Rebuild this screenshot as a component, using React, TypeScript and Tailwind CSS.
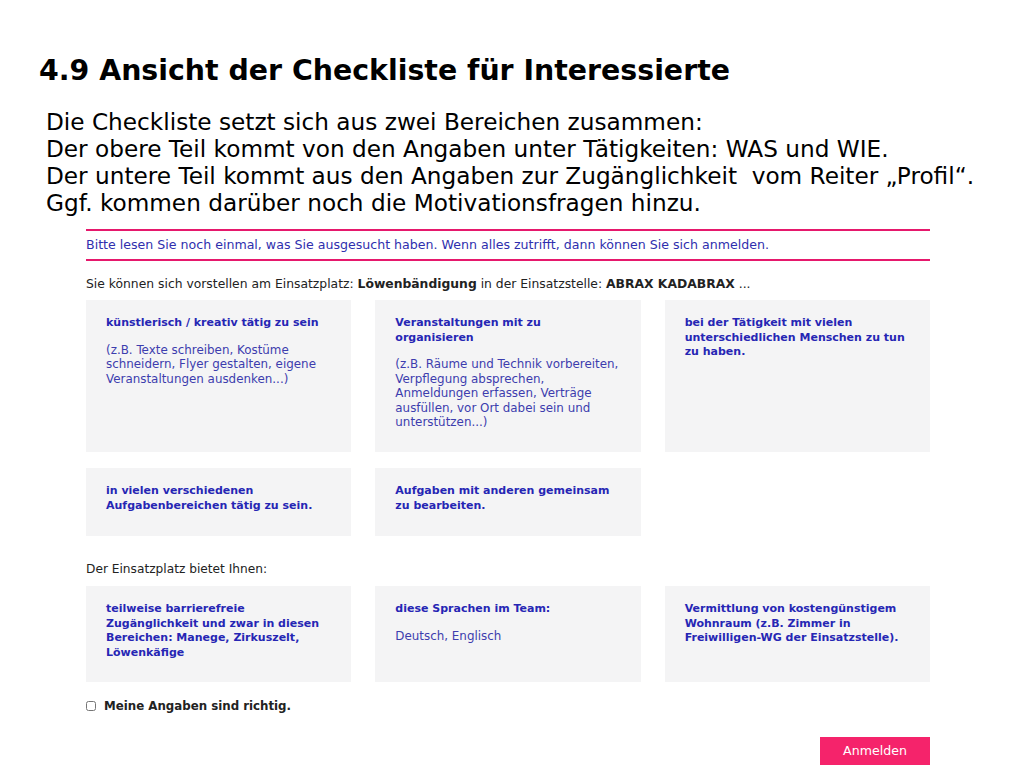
import React from "react";

const web = { fontFamily: '"DejaVu Sans", Verdana, sans-serif' };

function Card({ title, desc, h }: { title: React.ReactNode; desc?: React.ReactNode; h: string }) {
  return (
    <div className={`bg-[#f4f4f5] px-5 pt-[16px] ${h}`}>
      <div className="text-[11px] leading-[14.5px] font-bold text-[#2626b4]">{title}</div>
      {desc && <div className="mt-[12px] text-[11.9px] leading-[14.5px] text-[#3d3dae]">{desc}</div>}
    </div>
  );
}

export default function App() {
  return (
    <div className="w-[1024px] h-[768px] bg-white overflow-hidden text-black" style={{ fontFamily: '"DejaVu Sans", Verdana, sans-serif' }}>
      <h1 className="pl-[39px] pt-[53px] text-[28.4px] leading-[36px] font-bold">4.9 Ansicht der Checkliste für Interessierte</h1>
      <div className="pl-[46px] mt-[19px] text-[23.2px] leading-[27px]">
        <p>Die Checkliste setzt sich aus zwei Bereichen zusammen:</p>
        <p>Der obere Teil kommt von den Angaben unter Tätigkeiten: WAS und WIE.</p>
        <p>Der untere Teil kommt aus den Angaben zur Zugänglichkeit&nbsp; vom Reiter „Profil“.</p>
        <p>Ggf. kommen darüber noch die Motivationsfragen hinzu.</p>
      </div>
      <div className="ml-[86px] w-[844px] mt-[13px]" style={web}>
        <div className="border-t-2 border-b-2 border-[#e6186c] py-[7px] text-[12.6px] leading-[14px] text-[#2f2fae]">
          Bitte lesen Sie noch einmal, was Sie ausgesucht haben. Wenn alles zutrifft, dann können Sie sich anmelden.
        </div>
        <div className="mt-[16px] text-[12.35px] leading-[14px] text-[#222]">
          Sie können sich vorstellen am Einsatzplatz: <b>Löwenbändigung</b> in der Einsatzstelle: <b>ABRAX KADABRAX</b> ...
        </div>
        <div className="mt-[9px] grid grid-cols-3 gap-x-[24px] gap-y-[16px]">
          <Card
            h="h-[152px]"
            title="künstlerisch / kreativ tätig zu sein"
            desc={<>(z.B. Texte schreiben, Kostüme<br />schneidern, Flyer gestalten, eigene<br />Veranstaltungen ausdenken...)</>}
          />
          <Card
            h="h-[152px]"
            title={<>Veranstaltungen mit zu<br />organisieren</>}
            desc={<>(z.B. Räume und Technik vorbereiten,<br />Verpflegung absprechen,<br />Anmeldungen erfassen, Verträge<br />ausfüllen, vor Ort dabei sein und<br />unterstützen...)</>}
          />
          <Card
            h="h-[152px]"
            title={<>bei der Tätigkeit mit vielen<br />unterschiedlichen Menschen zu tun<br />zu haben.</>}
          />
          <Card h="h-[68px]" title={<>in vielen verschiedenen<br />Aufgabenbereichen tätig zu sein.</>} />
          <Card h="h-[68px]" title={<>Aufgaben mit anderen gemeinsam<br />zu bearbeiten.</>} />
        </div>
        <div className="mt-[26px] text-[12.2px] leading-[14px] text-[#222]">Der Einsatzplatz bietet Ihnen:</div>
        <div className="mt-[10px] grid grid-cols-3 gap-x-[24px]">
          <Card
            h="h-[96px]"
            title={<>teilweise barrierefreie<br />Zugänglichkeit und zwar in diesen<br />Bereichen: Manege, Zirkuszelt,<br />Löwenkäfige</>}
          />
          <Card h="h-[96px]" title="diese Sprachen im Team:" desc="Deutsch, Englisch" />
          <Card
            h="h-[96px]"
            title={<>Vermittlung von kostengünstigem<br />Wohnraum (z.B. Zimmer in<br />Freiwilligen-WG der Einsatzstelle).</>}
          />
        </div>
        <label className="mt-[17px] flex items-center gap-[8px] text-[11.8px] leading-[14px] font-bold text-[#222]">
          <input type="checkbox" className="w-[10px] h-[10px] m-0" />
          Meine Angaben sind richtig.
        </label>
        <div className="mt-[24px] flex justify-end">
          <button className="w-[110px] h-[28px] bg-[#f5236b] text-white text-[12.6px]">Anmelden</button>
        </div>
      </div>
    </div>
  );
}
